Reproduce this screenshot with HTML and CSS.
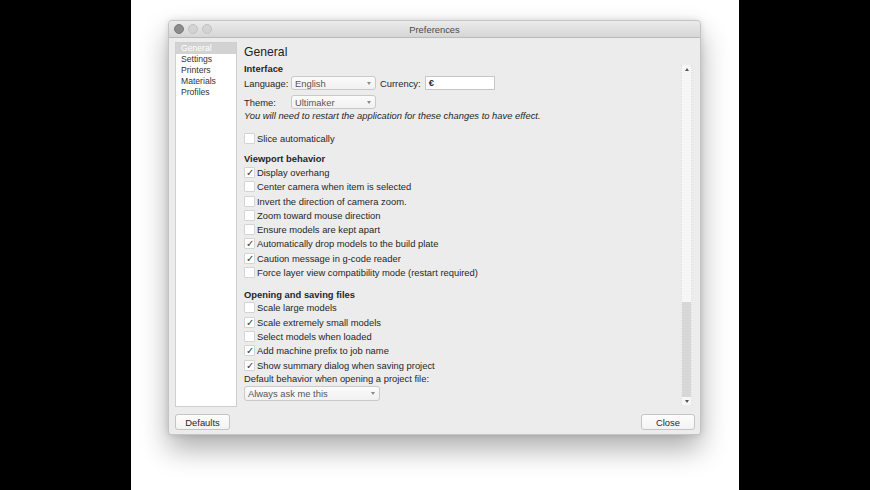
FILE: index.html
```html
<!DOCTYPE html>
<html lang="en">

<head>
    <meta charset="UTF-8">
    <title>Preferences</title>
    <link rel="stylesheet" href="styles.css">
</head>

<body>
    <div class="side-bar"></div>

    <div class="stage">
        <!-- Preferences window -->
        <div class="window">
            <div class="title-bar">
                <div class="lights">
                    <span class="light light-close"></span>
                    <span class="light"></span>
                    <span class="light"></span>
                </div>
                <div class="title">Preferences</div>
            </div>

            <div class="window-body">
                <div class="main">
                    <ul class="pages">
                        <li class="selected">General</li>
                        <li>Settings</li>
                        <li>Printers</li>
                        <li>Materials</li>
                        <li>Profiles</li>
                    </ul>

                    <div class="content">
                        <div class="form">
                            <h1>General</h1>
                            <div class="section-title">Interface</div>
                            <div class="field-row">
                                <span class="field-label">Language:</span>
                                <div class="combo combo-short"><span>English</span><span class="arrow"></span></div>
                                <span class="field-label currency-label">Currency:</span>
                                <div class="text-input">€</div>
                            </div>
                            <div class="field-row theme-row">
                                <span class="field-label">Theme:</span>
                                <div class="combo combo-short"><span>Ultimaker</span><span class="arrow"></span></div>
                            </div>
                            <div class="note">You will need to restart the application for these changes to have effect.</div>

                            <div class="check-row slice-row"><span class="box"></span>Slice automatically</div>

                            <div class="section-title viewport-title">Viewport behavior</div>
                            <div class="check-row"><span class="box checked">✓</span>Display overhang</div>
                            <div class="check-row"><span class="box"></span>Center camera when item is selected</div>
                            <div class="check-row"><span class="box"></span>Invert the direction of camera zoom.</div>
                            <div class="check-row"><span class="box"></span>Zoom toward mouse direction</div>
                            <div class="check-row"><span class="box"></span>Ensure models are kept apart</div>
                            <div class="check-row"><span class="box checked">✓</span>Automatically drop models to the build plate</div>
                            <div class="check-row"><span class="box checked">✓</span>Caution message in g-code reader</div>
                            <div class="check-row"><span class="box"></span>Force layer view compatibility mode (restart required)</div>

                            <div class="section-title files-title">Opening and saving files</div>
                            <div class="check-row"><span class="box"></span>Scale large models</div>
                            <div class="check-row"><span class="box checked">✓</span>Scale extremely small models</div>
                            <div class="check-row"><span class="box"></span>Select models when loaded</div>
                            <div class="check-row"><span class="box checked">✓</span>Add machine prefix to job name</div>
                            <div class="check-row"><span class="box checked">✓</span>Show summary dialog when saving project</div>
                            <div class="plain-row">Default behavior when opening a project file:</div>
                            <div class="combo combo-wide"><span>Always ask me this</span><span class="arrow"></span></div>
                        </div>

                        <!-- Scrollbar -->
                        <div class="scrollbar">
                            <div class="scroll-btn"><span class="tri-up"></span></div>
                            <div class="scroll-track">
                                <div class="scroll-thumb"></div>
                            </div>
                            <div class="scroll-btn"><span class="tri-down"></span></div>
                        </div>
                    </div>
                </div>

                <div class="buttons">
                    <button class="btn defaults-btn">Defaults</button>
                    <button class="btn close-btn">Close</button>
                </div>
            </div>
        </div>
    </div>

    <div class="side-bar"></div>
</body>

</html>
```

FILE: styles.css
```css
body {
    margin: 0;
    padding: 0;
    display: flex;
    width: 870px;
    height: 490px;
    overflow: hidden;
    font-family: "Liberation Sans", Arial, sans-serif;
    font-size: 9.4px;
    color: #262626;
    background: #000;
}

.side-bar {
    width: 131px;
    background: #000;
}

/* Stage */

.stage {
    width: 608px;
    background: #fff;
    padding: 20px 0 0 37px;
    box-sizing: border-box;
}

.window {
    width: 533px;
    height: 415px;
    background: #ececec;
    border: 1px solid #c4c4c4;
    border-radius: 4px 4px 3px 3px;
    box-sizing: border-box;
    box-shadow: 0 14px 28px rgba(0, 0, 0, 0.32), 0 0 6px rgba(0, 0, 0, 0.12);
    display: flex;
    flex-direction: column;
}

/* Title bar */

.title-bar {
    height: 16px;
    display: flex;
    align-items: center;
    position: relative;
    background: linear-gradient(#ebebeb, #d6d6d6);
    border-bottom: 1px solid #b9b9b9;
    border-radius: 4px 4px 0 0;
}

.lights {
    display: flex;
    gap: 4px;
    padding-left: 5px;
}

.light {
    width: 8px;
    height: 8px;
    border-radius: 50%;
    background: #d3d3d3;
    border: 0.5px solid #c3c3c3;
}

.light-close {
    background: #8c8c8c;
    border-color: #7c7c7c;
}

.title {
    position: absolute;
    left: 0;
    right: 0;
    text-align: center;
    color: #4a4a4a;
    font-size: 9.4px;
}

/* Body */

.window-body {
    flex: 1;
    display: flex;
    flex-direction: column;
    padding: 4px 5px 0 6px;
}

.main {
    display: flex;
    height: 365px;
}

.pages {
    list-style: none;
    margin: 0;
    padding: 0;
    width: 62px;
    height: 365px;
    box-sizing: border-box;
    background: #fff;
    border: 1px solid #cfcfcf;
}

.pages li {
    height: 11px;
    line-height: 11px;
    padding-left: 5px;
    font-size: 8.6px;
    color: #333;
}

.pages li.selected {
    background: #d2d2d2;
    color: #fff;
}

.content {
    flex: 1;
    display: flex;
    padding-left: 7px;
}

.form {
    flex: 1;
    padding-top: 2px;
}

h1 {
    margin: 0;
    height: 16px;
    line-height: 16px;
    font-size: 12.2px;
    font-weight: normal;
    color: #222;
}

.section-title {
    font-weight: bold;
    height: 14px;
    line-height: 14px;
    margin-top: 2px;
}

.viewport-title {
    margin-top: 7px;
    height: 13px;
    line-height: 13px;
}

.files-title {
    margin-top: 8px;
    height: 13px;
    line-height: 13px;
}

.field-row {
    display: flex;
    align-items: center;
    height: 14px;
}

.theme-row {
    margin-top: 5px;
}

.field-label {
    width: 47px;
}

.currency-label {
    width: auto;
    margin: 0 4px 0 4px;
}

.combo {
    display: flex;
    justify-content: space-between;
    align-items: center;
    height: 14px;
    box-sizing: border-box;
    padding: 0 4px 0 3px;
    background: linear-gradient(#fbfbfb, #f1f1f1);
    border: 1px solid #c9c9c9;
    border-radius: 3px;
    color: #555;
}

.combo-short {
    width: 85px;
}

.combo-wide {
    width: 136px;
    height: 15px;
}

.arrow {
    width: 0;
    height: 0;
    border-left: 2.5px solid transparent;
    border-right: 2.5px solid transparent;
    border-top: 3px solid #8a8a8a;
}

.text-input {
    width: 70px;
    height: 14px;
    box-sizing: border-box;
    line-height: 12px;
    padding-left: 3px;
    background: #fff;
    border: 1px solid #c6c6c6;
    font-weight: bold;
}

.note {
    font-style: italic;
    height: 14px;
    line-height: 14px;
}

.check-row {
    display: flex;
    align-items: center;
    height: 14.3px;
}

.slice-row {
    margin-top: 8px;
}

.box {
    width: 9px;
    height: 9px;
    margin-right: 2px;
    background: #fff;
    border: 1px solid #d4d4d4;
    border-radius: 1px;
    font-size: 9.5px;
    line-height: 9px;
    text-align: center;
    color: #3a3a3a;
    overflow: hidden;
}

.plain-row {
    height: 14px;
    line-height: 14px;
}

/* Scrollbar */

.scrollbar {
    width: 9px;
    margin: 23px 3px 2px 3px;
    display: flex;
    flex-direction: column;
    background: #f6f6f6;
    border-left: 1px dotted #dcdcdc;
    border-right: 1px dotted #dcdcdc;
}

.scroll-btn {
    height: 8px;
    display: flex;
    align-items: center;
    justify-content: center;
}

.tri-up {
    width: 0;
    height: 0;
    border-left: 2.5px solid transparent;
    border-right: 2.5px solid transparent;
    border-bottom: 3px solid #555;
}

.tri-down {
    width: 0;
    height: 0;
    border-left: 2.5px solid transparent;
    border-right: 2.5px solid transparent;
    border-top: 3px solid #555;
}

.scroll-track {
    flex: 1;
    display: flex;
    flex-direction: column;
    justify-content: flex-end;
}

.scroll-thumb {
    height: 95px;
    background: #d7d7d7;
}

/* Buttons */

.buttons {
    display: flex;
    justify-content: space-between;
    margin-top: 7px;
}

.btn {
    height: 16px;
    padding: 0;
    font-family: "Liberation Sans", Arial, sans-serif;
    font-size: 9.4px;
    color: #262626;
    background: linear-gradient(#fdfdfd, #f3f3f3);
    border: 1px solid #c4c4c4;
    border-radius: 3px;
}

.defaults-btn {
    width: 55px;
}

.close-btn {
    width: 54px;
}
```
